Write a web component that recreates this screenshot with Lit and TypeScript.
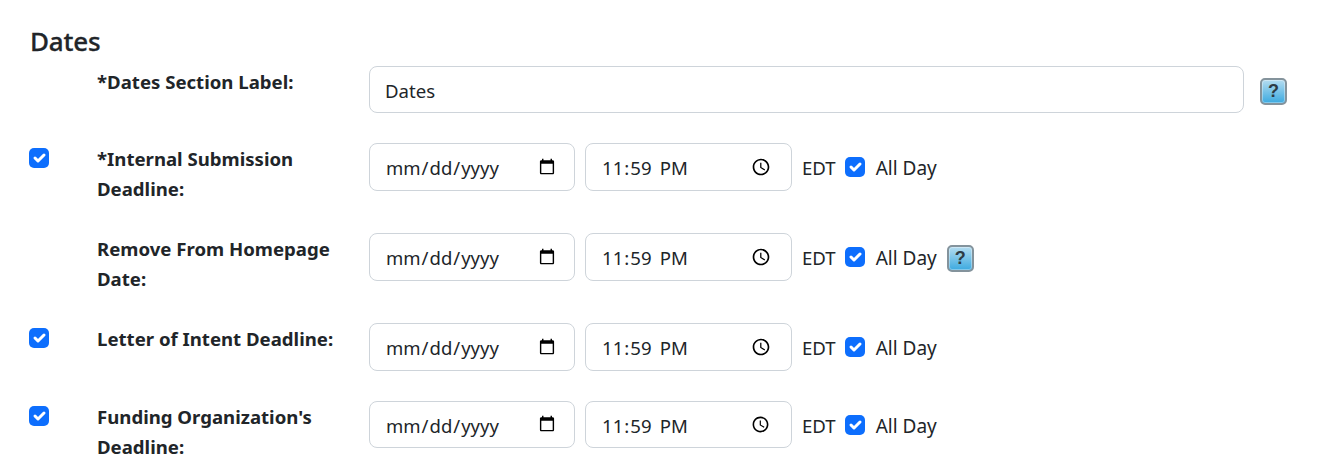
import { LitElement, html, css, nothing } from 'lit';
import { customElement } from 'lit/decorators.js';

interface DateRow {
  label: string[];
  toggle: boolean;
  help: boolean;
}

const ROWS: DateRow[] = [
  { label: ['*Internal Submission', 'Deadline:'], toggle: true, help: false },
  { label: ['Remove From Homepage', 'Date:'], toggle: false, help: true },
  { label: ['Letter of Intent Deadline:'], toggle: true, help: false },
  { label: ["Funding Organization's", 'Deadline:'], toggle: true, help: false },
];

const check = html`<span class="check">
  <svg viewBox="0 0 20 20" width="20" height="20">
    <path d="M6 10l3 3l6-6" fill="none" stroke="#fff" stroke-width="3" stroke-linecap="round" stroke-linejoin="round" />
  </svg>
</span>`;

const helpIcon = html`<span class="help">?</span>`;

@customElement('app-root')
export class AppRoot extends LitElement {
  static styles = css`
    :host {
      display: block;
      height: 475px;
      overflow: hidden;
      background: #fff;
      color: #212529;
      font-family: 'Noto Sans', sans-serif;
      font-size: 18.6px;
      line-height: 30px;
    }

    .page {
      padding: 23px 0 0 30px;
    }

    h2 {
      margin: 0 0 6.75px;
      font-size: 26px;
      line-height: 36px;
      font-weight: 500;
      letter-spacing: -0.2px;
      -webkit-text-stroke: 0.3px #212529;
    }

    .row {
      display: grid;
      grid-template-columns: 67px 272px 1fr;
      margin-bottom: 30px;
    }

    .toggle {
      margin-left: -1px;
      padding-top: 4.75px;
    }

    .toggle .check {
      display: block;
    }

    .label {
      margin: 1px 0 -1px;
      font-weight: 700;
    }

    .fields {
      display: flex;
      align-items: center;
      height: 47.5px;
    }

    input {
      box-sizing: border-box;
      height: 47.5px;
      padding: 9px 16px 7px 15px;
      border: 1px solid #ced4da;
      border-radius: 8px;
      background: #fff;
      color: #212529;
      font: inherit;
      outline: none;
    }

    input::-webkit-calendar-picker-indicator {
      margin-top: -2px;
    }

    .text {
      width: 875px;
    }

    .date {
      width: 206px;
      margin-right: 10px;
      font-size: 18.5px;
    }

    .time {
      width: 207px;
      margin-right: 10px;
      padding-right: 17px;
    }

    .time::-webkit-datetime-edit-ampm-field {
      margin-left: 3px;
    }

    .zone {
      margin-top: 2px;
      margin-right: 9px;
    }

    .check {
      display: inline-block;
      width: 20px;
      height: 20px;
      border-radius: 5px;
      background: #0d6efd;
    }

    .check svg {
      display: block;
    }

    .all-day {
      margin-top: 2px;
      margin-left: 11px;
      font-size: 19px;
    }

    .help {
      box-sizing: border-box;
      display: block;
      width: 27px;
      height: 27px;
      margin-top: 3px;
      border: 2px solid #84939c;
      border-radius: 5px;
      background: linear-gradient(#b4dcf0, #3caae0);
      box-shadow: inset 0 0 0 1px rgba(255, 255, 255, 0.35);
      color: #2e3b44;
      font: 700 18px/23px 'Liberation Sans', sans-serif;
      text-align: center;
    }

    .after-text {
      margin-left: 16px;
    }

    .after-day {
      margin-left: 10px;
    }
  `;

  render() {
    return html`
      <div class="page">
        <h2>Dates</h2>
        <div class="row">
          <div class="toggle"></div>
          <div class="label">*Dates Section Label:</div>
          <div class="fields">
            <input class="text" type="text" .value=${'Dates'} />
            <span class="after-text">${helpIcon}</span>
          </div>
        </div>
        ${ROWS.map(
          (row) => html`
            <div class="row">
              <div class="toggle">${row.toggle ? check : nothing}</div>
              <div class="label">${row.label.map((line) => html`<div>${line}</div>`)}</div>
              <div class="fields">
                <input class="date" type="date" />
                <input class="time" type="time" .value=${'23:59'} />
                <span class="zone">EDT</span>
                ${check}
                <span class="all-day">All Day</span>
                ${row.help ? html`<span class="after-day">${helpIcon}</span>` : nothing}
              </div>
            </div>
          `,
        )}
      </div>
    `;
  }
}
